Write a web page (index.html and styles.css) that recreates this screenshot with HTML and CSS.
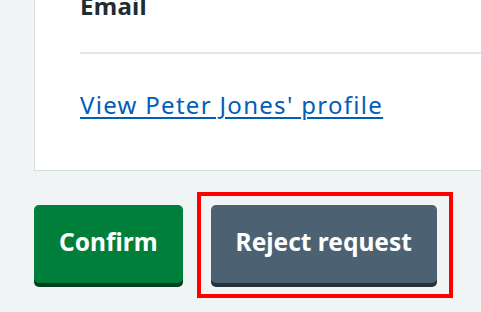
FILE: index.html
```html
<!DOCTYPE html>
<html lang="en">
<head>
<meta charset="utf-8">
<title>Request</title>
<link rel="stylesheet" href="styles.css">
</head>
<body>
<main class="page">
  <section class="card">
    <dl class="summary">
      <dt class="summary-key">Email</dt>
    </dl>
    <p class="profile"><a class="link" href="#">View Peter Jones' profile</a></p>
  </section>
  <div class="actions">
    <button class="button button-confirm" type="button">Confirm</button>
    <div class="highlight">
      <button class="button button-secondary" type="button">Reject request</button>
    </div>
  </div>
</main>
</body>
</html>
```

FILE: styles.css
```css
html, body {
  margin: 0;
  padding: 0;
  background: #f0f4f5;
  overflow: hidden;
}
body {
  font-family: "Noto Sans", "Liberation Sans", Arial, sans-serif;
  color: #212b32;
}
.page {
  padding-left: 34px;
}
.card {
  margin-top: -22px;
  background: #ffffff;
  border: 1px solid #d8dde0;
  border-right: none;
  padding: 0 0 0 45px;
  height: 193px;
  box-sizing: border-box;
}
.summary {
  margin: 0;
  padding-top: 12px;
  border-bottom: 2px solid #e3e8ea;
  height: 75px;
  box-sizing: border-box;
}
.summary-key {
  font-weight: 700;
  font-size: 24px;
  line-height: 30px;
  letter-spacing: 0.3px;
}
.profile {
  margin: 0;
  padding-top: 36px;
  font-size: 24px;
  line-height: 30px;
  letter-spacing: 1.3px;
}
.link {
  color: #005eb8;
  text-decoration: underline;
  text-decoration-thickness: 1.5px;
  text-underline-offset: 3px;
}
.actions {
  display: flex;
  align-items: flex-start;
  gap: 14px;
  margin-top: 21px;
}
.button {
  font-family: inherit;
  font-weight: 700;
  font-size: 24.5px;
  line-height: 32px;
  color: #ffffff;
  border: none;
  border-radius: 5px;
  padding: 21px 25px 25px;
  height: 78px;
  cursor: pointer;
}
.button-confirm {
  margin-top: 13px;
  background: #007f3b;
  box-shadow: 0 4px 0 #00401e;
}
.button-secondary {
  background: #4c6272;
  box-shadow: 0 4px 0 #263139;
}
.highlight {
  border: 4px solid #ff0000;
  padding: 9px 12px 11px 10px;
}
.highlight .button {
  display: block;
}
```
